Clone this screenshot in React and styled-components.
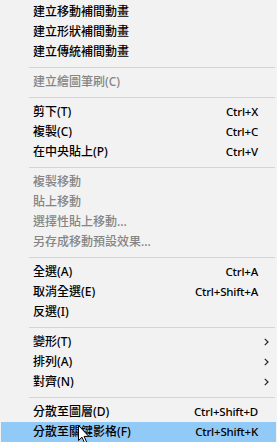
import React from "react";
import styled, { createGlobalStyle } from "styled-components";

const GlobalStyle = createGlobalStyle`
  html, body {
    margin: 0;
    padding: 0;
    background: #f2f2f2;
    height: 100%;
  }
  #root {
    height: 100%;
  }
`;

const Menu = styled.ul`
  position: relative;
  list-style: none;
  margin: 0;
  padding: 2px 1px 0;
  height: 100%;
  box-sizing: border-box;
  background: #f2f2f2;
  font-family: "Noto Sans", "Noto Sans CJK TC", sans-serif;
  font-size: 12px;
  font-weight: 500;
  overflow: hidden;
`;

const Item = styled.li`
  display: flex;
  align-items: center;
  height: 20px;
  padding-left: 32px;
  color: ${(p) => (p.disabled ? "#858585" : "#000")};
  background: ${(p) => (p.active ? "#91c9f7" : "transparent")};
  white-space: nowrap;
`;

const Label = styled.span`
  flex: 1;
  line-height: 20px;
`;

const Shortcut = styled.span`
  line-height: 20px;
  font-size: 11.5px;
  letter-spacing: -0.2px;
`;

const SubCell = styled.span`
  width: 18px;
  display: flex;
  align-items: center;
  padding-left: 6px;
  box-sizing: border-box;
`;

const Separator = styled.li`
  height: 10px;
  display: flex;
  align-items: center;
  padding-left: 28px;
  padding-right: 1px;

  &::after {
    content: "";
    flex: 1;
    height: 1px;
    background: #d4d4d4;
  }
`;

const Cursor = styled.svg`
  position: absolute;
  left: 78px;
  top: 425px;
`;

const Chevron = () => (
  <svg width="5" height="8" viewBox="0 0 5 8">
    <path d="M0.8 0.8 L4 4 L0.8 7.2" fill="none" stroke="#222" strokeWidth="1.2" />
  </svg>
);

const groups = [
  [
    { label: "建立移動補間動畫" },
    { label: "建立形狀補間動畫" },
    { label: "建立傳統補間動畫" },
  ],
  [{ label: "建立繪圖筆刷(C)", disabled: true }],
  [
    { label: "剪下(T)", shortcut: "Ctrl+X" },
    { label: "複製(C)", shortcut: "Ctrl+C" },
    { label: "在中央貼上(P)", shortcut: "Ctrl+V" },
  ],
  [
    { label: "複製移動", disabled: true },
    { label: "貼上移動", disabled: true },
    { label: "選擇性貼上移動...", disabled: true },
    { label: "另存成移動預設效果...", disabled: true },
  ],
  [
    { label: "全選(A)", shortcut: "Ctrl+A" },
    { label: "取消全選(E)", shortcut: "Ctrl+Shift+A" },
    { label: "反選(I)" },
  ],
  [
    { label: "變形(T)", sub: true },
    { label: "排列(A)", sub: true },
    { label: "對齊(N)", sub: true },
  ],
  [
    { label: "分散至圖層(D)", shortcut: "Ctrl+Shift+D" },
    { label: "分散至關鍵影格(F)", shortcut: "Ctrl+Shift+K", active: true },
  ],
];

const App = () => {
  return (
    <>
      <GlobalStyle />
      <Menu>
        {groups.map((group, gi) => (
          <React.Fragment key={gi}>
            {gi > 0 && <Separator />}
            {group.map((item) => (
              <Item key={item.label} disabled={item.disabled} active={item.active}>
                <Label>{item.label}</Label>
                {item.shortcut && <Shortcut>{item.shortcut}</Shortcut>}
                <SubCell>{item.sub && <Chevron />}</SubCell>
              </Item>
            ))}
          </React.Fragment>
        ))}
        <Cursor width="12" height="19" viewBox="0 0 12 19">
          <path
            d="M0.5 0.5 L0.5 15.5 L4 12.2 L6.6 18 L8.6 17.1 L6.1 11.4 L10.8 11.4 Z"
            fill="#fff"
            stroke="#000"
            strokeWidth="1"
          />
        </Cursor>
      </Menu>
    </>
  );
};

export default App;
